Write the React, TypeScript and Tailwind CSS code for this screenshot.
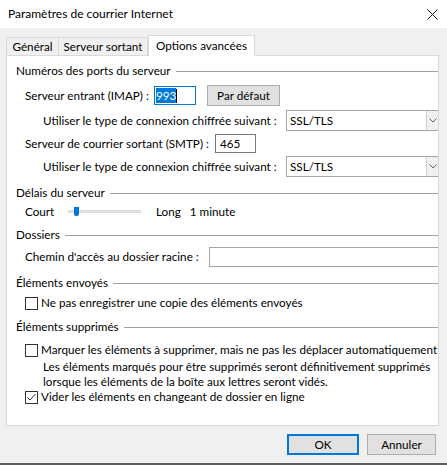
import React from 'react';

const font = "font-['Lato','Liberation_Sans',sans-serif]";

const SectionHeader: React.FC<{ title: string; className?: string }> = ({ title, className }) => (
    <div className={`flex items-center h-[16px] pl-[9px] ${className ?? ''}`}>
        <span className="whitespace-nowrap">{title}</span>
        <div className="flex-1 ml-[5px] h-px bg-[#a0a0a0]" />
    </div>
);

const SelectBox: React.FC<{ value: string }> = ({ value }) => (
    <div className="flex items-center w-[153px] h-[21px] border border-[#a5a5a5] bg-white shrink-0">
        <span className="flex-1 pl-[3px]">{value}</span>
        <div className="w-[12px] h-full flex items-center justify-center bg-[#f0f0f0] border-l border-[#d0d0d0]">
            <svg width="8" height="5" viewBox="0 0 8 5" fill="none" stroke="#606060" strokeWidth="1">
                <path d="M0.5 0.5 L4 4 L7.5 0.5" />
            </svg>
        </div>
    </div>
);

const CheckBox: React.FC<{ checked?: boolean; label: string; className?: string }> = ({ checked, label, className }) => (
    <div className={`flex items-center h-[16px] pl-[18px] whitespace-nowrap ${className ?? ''}`}>
        <div className="w-[13px] h-[13px] border border-[#333] bg-white flex items-center justify-center shrink-0">
            {checked && (
                <svg width="11" height="11" viewBox="0 0 11 11" fill="none" stroke="#333" strokeWidth="1">
                    <path d="M1.5 5.5 L4 8 L9.5 2" />
                </svg>
            )}
        </div>
        <span className="ml-[3px]">{label}</span>
    </div>
);

export default function App() {
    return (
        <div className={`w-[447px] h-[465px] bg-[#f0f0f0] flex flex-col text-[11.7px] text-black ${font} overflow-hidden`}>
            {/* title bar */}
            <div className="h-[28px] bg-white flex items-center justify-between pl-[8px] pr-[9px] shrink-0">
                <span className="text-[12px]">Paramètres de courrier Internet</span>
                <svg width="11" height="11" viewBox="0 0 11 11" stroke="#111" strokeWidth="1">
                    <path d="M0.5 0.5 L10.5 10.5 M10.5 0.5 L0.5 10.5" />
                </svg>
            </div>

            {/* tabs */}
            <div className="mt-[7px] h-[20px] flex items-end pl-[6px] shrink-0 relative z-10">
                <div className="w-[53px] h-[18px] flex items-center justify-center border border-b-0 border-[#d9d9d9] bg-[#f0f0f0]">Général</div>
                <div className="w-[89px] h-[18px] flex items-center justify-center border border-b-0 border-l-0 border-[#d9d9d9] bg-[#f0f0f0]">Serveur sortant</div>
                <div className="w-[107px] h-[21px] -mb-px flex items-center justify-center border border-b-0 border-[#d9d9d9] bg-white">Options avancées</div>
            </div>

            {/* panel */}
            <div className="ml-[6px] w-[433px] h-[371px] bg-white border border-[#d9d9d9] overflow-hidden shrink-0">
                <div className="flex flex-col w-[431px]">
                    <SectionHeader title="Numéros des ports du serveur" className="mt-[7px]" />

                    <div className="mt-[6px] h-[21px] flex items-center pl-[18px] whitespace-nowrap">
                        <span className="w-[129px] shrink-0">Serveur entrant (IMAP) :</span>
                        <div className="w-[42px] h-[19px] border border-[#0078d7] flex items-center pl-[1px] shrink-0">
                            <span className="bg-[#0078d7] text-white leading-[15px]">993</span>
                            <span className="w-px h-[14px] bg-black" />
                        </div>
                        <div className="ml-[11px] w-[73px] h-[21px] border border-[#adadad] bg-[#e1e1e1] flex items-center justify-center shrink-0">
                            Par défaut
                        </div>
                    </div>

                    <div className="mt-[4px] h-[21px] flex items-center pl-[36px] whitespace-nowrap">
                        <span className="w-[243px] shrink-0">Utiliser le type de connexion chiffrée suivant :</span>
                        <SelectBox value="SSL/TLS" />
                    </div>

                    <div className="mt-[3px] h-[19px] flex items-center pl-[18px] whitespace-nowrap">
                        <span className="w-[190px] shrink-0">Serveur de courrier sortant (SMTP) :</span>
                        <div className="w-[41px] h-[19px] border border-[#7a7a7a] flex items-center pl-[4px] shrink-0">465</div>
                    </div>

                    <div className="mt-[3px] h-[21px] flex items-center pl-[36px] whitespace-nowrap">
                        <span className="w-[243px] shrink-0">Utiliser le type de connexion chiffrée suivant :</span>
                        <SelectBox value="SSL/TLS" />
                    </div>

                    <SectionHeader title="Délais du serveur" className="mt-[8px]" />

                    <div className="mt-[3px] h-[16px] flex items-center pl-[18px] whitespace-nowrap">
                        <span className="w-[43px] shrink-0">Court</span>
                        <div className="relative w-[73px] h-[16px] shrink-0">
                            <div className="absolute left-0 right-0 top-[6px] h-[3px] bg-[#e7e7e7] border border-[#d6d6d6]" />
                            <div className="absolute left-[6px] top-[3px] w-[5px] h-[9px] bg-[#0078d7] rounded-b-[2px]" />
                        </div>
                        <span className="ml-[15px]">Long</span>
                        <span className="ml-[9px]">1 minute</span>
                    </div>

                    <SectionHeader title="Dossiers" className="mt-[7px]" />

                    <div className="mt-[4px] h-[20px] flex items-center pl-[18px] whitespace-nowrap">
                        <span className="w-[184px] shrink-0">Chemin d'accès au dossier racine :</span>
                        <div className="w-[240px] h-[20px] border border-[#a5a5a5] shrink-0" />
                    </div>

                    <SectionHeader title="Éléments envoyés" className="mt-[8px]" />
                    <CheckBox label="Ne pas enregistrer une copie des éléments envoyés" className="mt-[4px]" />

                    <SectionHeader title="Éléments supprimés" className="mt-[8px]" />
                    <CheckBox label="Marquer les éléments à supprimer, mais ne pas les déplacer automatiquement" className="mt-[7px]" />
                    <div className="mt-[1px] pl-[36px] leading-[15px] whitespace-nowrap">
                        <div>Les éléments marqués pour être supprimés seront définitivement supprimés</div>
                        <div>lorsque les éléments de la boîte aux lettres seront vidés.</div>
                    </div>
                    <CheckBox checked label="Vider les éléments en changeant de dossier en ligne" />
                </div>
            </div>

            {/* buttons */}
            <div className="mt-[8px] flex justify-end pr-[11px] gap-[8px] shrink-0">
                <div className="w-[72px] h-[21px] border-2 border-[#0078d7] bg-[#e1e1e1] flex items-center justify-center">OK</div>
                <div className="w-[69px] h-[21px] border border-[#adadad] bg-[#e1e1e1] flex items-center justify-center">Annuler</div>
            </div>

            <div className="flex-1" />
            <div className="h-[2px] bg-[#5f5f5f] shrink-0" />
        </div>
    );
}
